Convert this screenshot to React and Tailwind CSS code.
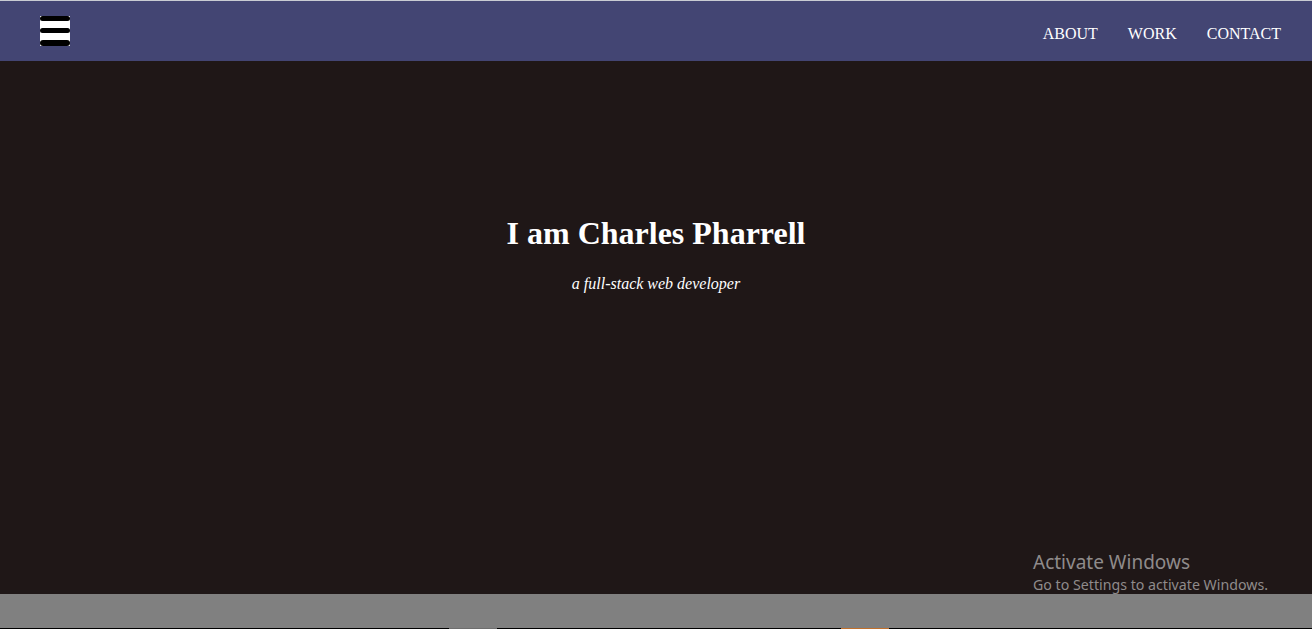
import React from "react";

function Hamburger() {
  return (
    <div className="w-[30px] h-[30px] bg-white flex flex-col justify-between py-0">
      <div className="h-[5px] w-full bg-black rounded-full" />
      <div className="h-[5px] w-full bg-black rounded-full" />
      <div className="h-[6px] w-full bg-black rounded-full" />
    </div>
  );
}

export default function App() {
  const serif = { fontFamily: '"Liberation Serif", "Times New Roman", serif' };
  return (
    <div className="relative w-[1312px] h-[629px] overflow-hidden bg-[#1f1717] flex flex-col" style={serif}>
      <div className="h-px bg-[#c9ccd3]" />
      <header className="h-[60px] bg-[#434573] flex items-center justify-between pl-[40px] pr-[31px]">
        <Hamburger />
        <nav className="flex gap-[30px] mt-[5px] text-white text-[16px] leading-[24px]">
          <a>ABOUT</a>
          <a>WORK</a>
          <a>CONTACT</a>
        </nav>
      </header>
      <main className="flex-1 flex flex-col items-center pt-[154px] text-white">
        <h1 className="text-[32px] leading-[36px] font-bold">I am Charles Pharrell</h1>
        <p className="mt-[21px] text-[16px] leading-[24px] italic">a full-stack web developer</p>
      </main>
      <footer className="h-[34px] bg-[#808080]" />
      <div className="h-px bg-black flex">
        <div className="ml-[449px] w-[48px] bg-[#6e6e6e]" />
        <div className="ml-[344px] w-[48px] bg-[#c0702c]" />
      </div>
      <div
        className="absolute left-[1033px] top-[549px] text-[#8f8b8b]"
        style={{ fontFamily: '"Noto Sans", "Open Sans", sans-serif' }}
      >
        <div className="text-[19px] leading-[26px]">Activate Windows</div>
        <div className="text-[14.2px] leading-[20px] mt-0">Go to Settings to activate Windows.</div>
      </div>
    </div>
  );
}
